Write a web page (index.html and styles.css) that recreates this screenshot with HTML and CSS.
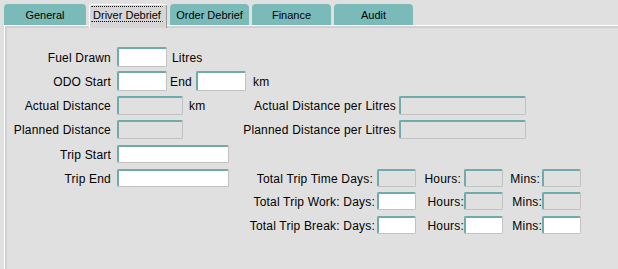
FILE: index.html
```html
<!DOCTYPE html>
<html>
<head>
<meta charset="utf-8">
<title>Driver Debrief</title>
<link rel="stylesheet" href="styles.css">
</head>
<body>
<div class="tabs">
  <div class="tab t-general">General</div>
  <div class="tab active t-driver"><span class="focus">Driver Debrief</span></div>
  <div class="tab">Order Debrief</div>
  <div class="tab">Finance</div>
  <div class="tab">Audit</div>
</div>
<div class="panel">
  <div class="form">
    <div class="row">
      <div class="left">
        <span class="lbl">Fuel Drawn</span>
        <span class="inp w50 h20"></span>
        <span class="unit">Litres</span>
      </div>
    </div>
    <div class="row">
      <div class="left">
        <span class="lbl">ODO Start</span>
        <span class="inp w50 h20"></span>
        <span class="unit end">End</span>
        <span class="inp w50 h20"></span>
        <span class="unit km2">km</span>
      </div>
    </div>
    <div class="row">
      <div class="left fixed">
        <span class="lbl">Actual Distance</span>
        <span class="inp w66 h19 dis"></span>
        <span class="unit km">km</span>
      </div>
      <span class="rlbl">Actual Distance per Litres</span>
      <span class="inp w127 h19 dis"></span>
    </div>
    <div class="row">
      <div class="left fixed">
        <span class="lbl">Planned Distance</span>
        <span class="inp w66 h19 dis"></span>
      </div>
      <span class="rlbl">Planned Distance per Litres</span>
      <span class="inp w127 h19 dis"></span>
    </div>
    <div class="row">
      <div class="left fixed">
        <span class="lbl">Trip Start</span>
        <span class="inp w112 h18"></span>
      </div>
    </div>
    <div class="row">
      <div class="left fixed">
        <span class="lbl">Trip End</span>
        <span class="inp w112 h18"></span>
      </div>
      <span class="tlbl sp">Total Trip Time Days:</span>
      <span class="inp w39 h18 dis"></span>
      <span class="hlbl sp3">Hours:</span>
      <span class="inp w39 h18 dis"></span>
      <span class="mlbl sp">Mins:</span>
      <span class="inp w39 h18 dis"></span>
    </div>
    <div class="row">
      <div class="left fixed"></div>
      <span class="tlbl">Total Trip Work: Days:</span>
      <span class="inp w39 h18"></span>
      <span class="hlbl">Hours:</span>
      <span class="inp w39 h18 dis"></span>
      <span class="mlbl">Mins:</span>
      <span class="inp w39 h18 dis"></span>
    </div>
    <div class="row">
      <div class="left fixed"></div>
      <span class="tlbl">Total Trip Break: Days:</span>
      <span class="inp w39 h18"></span>
      <span class="hlbl">Hours:</span>
      <span class="inp w39 h18"></span>
      <span class="mlbl">Mins:</span>
      <span class="inp w39 h18"></span>
    </div>
  </div>
</div>
</body>
</html>
```
FILE: styles.css
```css
* { box-sizing: border-box; }
html, body {
  margin: 0;
  height: 100%;
  overflow: hidden;
}
body {
  background: #e0e0e0;
  font-family: "Liberation Sans", Arial, sans-serif;
  font-size: 12px;
  color: #000;
  display: flex;
  flex-direction: column;
}
.tabs {
  display: flex;
  align-items: flex-start;
  gap: 3px;
  padding: 4px 0 0 4px;
  flex: none;
}
.tab {
  width: 79px;
  height: 21px;
  padding-top: 2px;
  line-height: 19px;
  font-size: 11px;
  text-align: center;
  background: #7abbb9;
  border-radius: 4px 4px 0 0;
}
.t-general { width: 82px; }
.t-driver { width: 78px; }
.tab.active {
  position: relative;
  z-index: 1;
  height: 24px;
  margin-bottom: -3px;
  background: #d6d6d6;
  border-top: 1px solid #fff;
  border-left: 1px solid #fff;
  border-right: 1px solid #9a9a9a;
  border-radius: 3px 3px 0 0;
  padding: 1px 3px 0 1px;
  line-height: 11px;
}
.focus {
  display: block;
  border: 1px dotted #000;
  border-left-color: transparent;
  border-right-color: transparent;
  padding-top: 3px;
  height: 16px;
}
.panel {
  flex: 1;
  margin-left: 4px;
  border-top: 1px solid #fff;
  border-left: 1px solid #fff;
  box-shadow: inset 2px 2px 0 #d0d0d0;
  padding-top: 21px;
  letter-spacing: 0.2px;
}
.form {
  display: grid;
  grid-template-rows: 24px 25px 24px 25px 24px 23px 24px 24px;
}
.row {
  display: flex;
  align-items: center;
  align-self: start;
}
.left {
  display: flex;
  align-items: center;
}
.left.fixed { width: 235px; }
.lbl {
  width: 106px;
  margin-right: 6px;
  text-align: right;
  white-space: nowrap;
  padding-top: 1px;
}
.unit { padding-top: 1px; white-space: nowrap; }
.inp + .unit { margin-left: 5px; }
.unit.end { margin-right: 4px; margin-left: 3px; }
.unit.km2 { margin-left: 7px; }
.unit.km { margin-left: 6px; }
.rlbl {
  width: 156px;
  margin-right: 3px;
  text-align: right;
  white-space: nowrap;
  padding-top: 1px;
}
.tlbl {
  width: 135px;
  margin-right: 2px;
  text-align: right;
  white-space: nowrap;
  padding-top: 1px;
}
.hlbl {
  width: 48px;
  text-align: right;
  white-space: nowrap;
  padding-top: 1px;
}
.mlbl {
  width: 39px;
  text-align: right;
  white-space: nowrap;
  padding-top: 1px;
}
.sp { padding-right: 2px; }
.sp3 { padding-right: 3px; }
.inp {
  display: block;
  flex: none;
  background: #fff;
  border-top: 2px solid #6eaba9;
  border-left: 2px solid #6eaba9;
  border-right: 1px solid #c2c2c2;
  border-bottom: 1px solid #c2c2c2;
  border-radius: 2px;
}
.inp.dis { background: #e0e0e0; }
.w39 { width: 39px; }
.w50 { width: 50px; }
.w66 { width: 66px; }
.w112 { width: 112px; }
.w127 { width: 127px; }
.h18 { height: 18px; }
.h19 { height: 19px; }
.h20 { height: 20px; }
```
